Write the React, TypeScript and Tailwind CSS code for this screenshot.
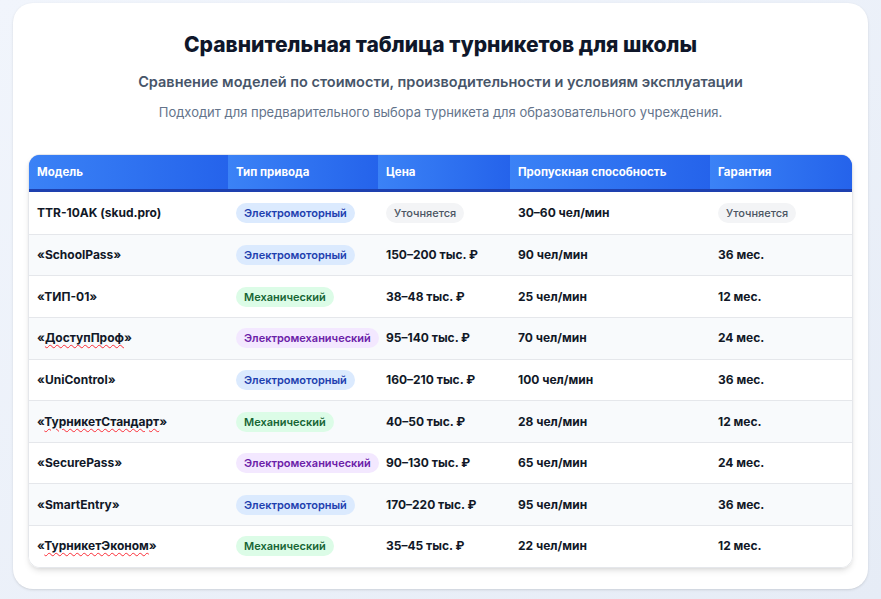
import React from "react";

type Row = { m: React.ReactNode; t: string; p: string; c: string; g: string; even?: boolean };
const W = (s: string) => <span className="underline decoration-wavy decoration-red-500 decoration-1 underline-offset-2">{s}</span>;
const rows: Row[] = [
  { m: "TTR-10AK (skud.pro)", t: "e", p: "?", c: "30–60 чел/мин", g: "?" },
  { m: "«SchoolPass»", t: "e", p: "150–200 тыс. ₽", c: "90 чел/мин", g: "36 мес." },
  { m: "«ТИП-01»", t: "m", p: "38–48 тыс. ₽", c: "25 чел/мин", g: "12 мес." },
  { m: <>«{W("ДоступПроф")}»</>, t: "x", p: "95–140 тыс. ₽", c: "70 чел/мин", g: "24 мес." },
  { m: "«UniControl»", t: "e", p: "160–210 тыс. ₽", c: "100 чел/мин", g: "36 мес." },
  { m: <>«{W("ТурникетСтандарт")}»</>, t: "m", p: "40–50 тыс. ₽", c: "28 чел/мин", g: "12 мес." },
  { m: "«SecurePass»", t: "x", p: "90–130 тыс. ₽", c: "65 чел/мин", g: "24 мес." },
  { m: "«SmartEntry»", t: "e", p: "170–220 тыс. ₽", c: "95 чел/мин", g: "36 мес." },
  { m: <>«{W("ТурникетЭконом")}»</>, t: "m", p: "35–45 тыс. ₽", c: "22 чел/мин", g: "12 мес." },
];

const Badge = ({ t }: { t: string }) => {
  if (t === "e") return <span className="rounded-full bg-[#dbeafe] px-2 py-[3px] text-[11px] font-semibold text-[#1e40af]">Электромоторный</span>;
  if (t === "m") return <span className="rounded-full bg-[#dcfce7] px-2 py-[3px] text-[11px] font-semibold text-[#166534]">Механический</span>;
  if (t === "x") return <span className="rounded-full bg-[#f3e8ff] px-2 py-[3px] text-[11px] font-semibold text-[#6b21a8]">Электромеханический</span>;
  return <span className="rounded-full bg-[#f3f4f6] px-2 py-[3px] text-[11px] font-medium text-[#4b5563]">Уточняется</span>;
};

export default function App() {
  const cols = "grid grid-cols-[199px_150px_132px_200px_1fr]";
  return (
    <div className="min-h-[599px] bg-gradient-to-br from-[#f1f5fc] to-[#e6ecf6] px-[13px] pt-[3px] pb-3" style={{ fontFamily: "Inter, 'Noto Sans', sans-serif" }}>
      <div className="rounded-[20px] bg-white px-[15px] pt-[28px] pb-[21px] shadow-sm">
        <h1 className="text-center text-[21px] font-extrabold leading-[28px] text-[#0f172a]">Сравнительная таблица турникетов для школы</h1>
        <p className="mt-[12px] text-center text-[14.5px] font-semibold text-[#475569]">Сравнение моделей по стоимости, производительности и условиям эксплуатации</p>
        <p className="mt-[10px] text-center text-[13px] text-[#64748b]">Подходит для предварительного выбора турникета для образовательного учреждения.</p>
        <div className="mt-[32px] overflow-hidden rounded-[12px] border border-[#e5e7eb] shadow-md">
          <div className={`${cols} h-[37px] border-b-[3px] border-[#1e40af] bg-gradient-to-r from-[#3b82f6] to-[#2563eb] text-[11.5px] font-bold text-white`}>
            {["Модель", "Тип привода", "Цена", "Пропускная способность", "Гарантия"].map((h) => (
              <div key={h} className="flex items-center bg-gradient-to-r from-[#3b82f6] to-[#2563eb] px-[8px]">{h}</div>
            ))}
          </div>
          {rows.map((r, i) => (
            <div key={i} className={`${cols} h-[41.6px] items-center text-[12px] font-bold text-[#111827] ${i % 2 ? "bg-[#f8fafc]" : "bg-white"} ${i ? "border-t border-[#e5e7eb]" : ""}`}>
              <div className="px-[8px]">{r.m}</div>
              <div className="px-[8px]"><Badge t={r.t} /></div>
              <div className="px-[8px]">{r.p === "?" ? <Badge t="?" /> : r.p}</div>
              <div className="px-[8px]">{r.c}</div>
              <div className="px-[8px]">{r.g === "?" ? <Badge t="?" /> : r.g}</div>
            </div>
          ))}
        </div>
      </div>
    </div>
  );
}
